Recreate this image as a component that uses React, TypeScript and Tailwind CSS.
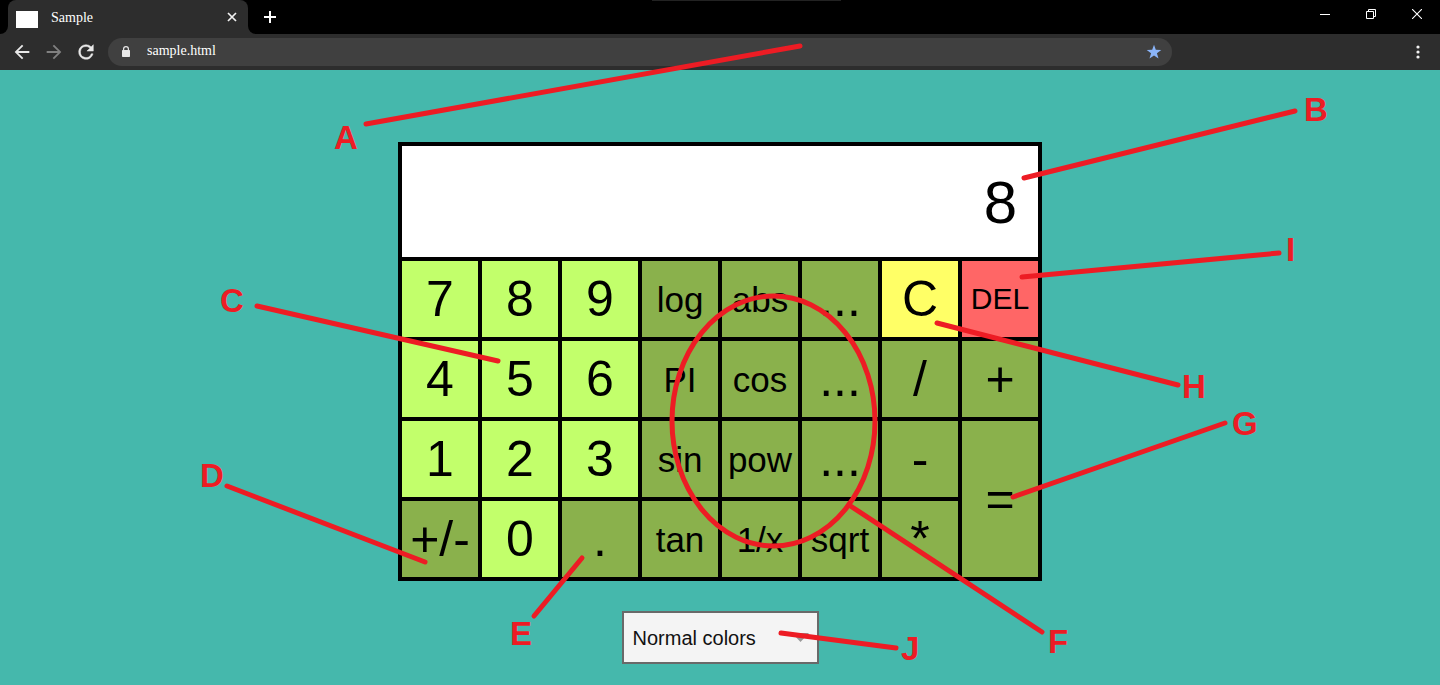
import React from "react";

type Tone = "digit" | "dark" | "clear" | "del";
type Key = { label: string; tone: Tone; size?: "md" | "sm"; tall?: boolean };

const tones: Record<Tone, string> = {
  digit: "bg-[#c2ff6b]",
  dark: "bg-[#8ab14c]",
  clear: "bg-[#ffff66]",
  del: "bg-[#ff6666]",
};

const d = (label: string): Key => ({ label, tone: "digit" });
const op = (label: string): Key => ({ label, tone: "dark" });
const fn = (label: string): Key => ({ label, tone: "dark", size: "md" });

const keys: Key[] = [
  d("7"), d("8"), d("9"), fn("log"), fn("abs"), op("..."),
  { label: "C", tone: "clear" },
  { label: "DEL", tone: "del", size: "sm" },
  d("4"), d("5"), d("6"), fn("PI"), fn("cos"), op("..."), op("/"), op("+"),
  d("1"), d("2"), d("3"), fn("sin"), fn("pow"), op("..."), op("-"),
  { label: "=", tone: "dark", tall: true },
  op("+/-"), d("0"), op("."), fn("tan"), fn("1/x"), fn("sqrt"), op("*"),
];

function CalcKey({ k }: { k: Key }) {
  const text =
    k.size === "md" ? "text-[35px]" : k.size === "sm" ? "text-[30px]" : "text-[50px]";
  return (
    <button
      type="button"
      className={`flex items-center justify-center leading-none text-black ${tones[k.tone]} ${text} ${k.tall ? "row-span-2" : ""}`}
    >
      {k.label}
    </button>
  );
}

function Browser() {
  return (
    <header className="font-['Liberation_Serif',serif] text-sm text-white">
      <div className="relative flex h-[34px] bg-black">
        <div className="absolute left-1/2 top-0 h-px w-[189px] -translate-x-[68px] bg-[#222222]" />
        <div className="flex w-2 items-end bg-[#2d2d2d]">
          <div className="h-full w-full rounded-br-lg bg-black" />
        </div>
        <div className="bg-black">
          <div className="flex h-[34px] w-60 items-center rounded-t-lg bg-[#2d2d2d] px-2">
            <span className="mt-1 h-[17px] w-[22px] bg-white" />
            <span className="ml-[13px] mt-0.5 flex-1">Sample</span>
            <button type="button" aria-label="Close tab" className="flex size-4 items-center justify-center">
              <svg width="10" height="10" viewBox="0 0 10 10" stroke="#f1f1f1" strokeWidth="1.7">
                <path d="M1 1l8 8M9 1l-8 8" />
              </svg>
            </button>
          </div>
        </div>
        <div className="w-2 bg-[#2d2d2d]">
          <div className="h-full w-full rounded-bl-lg bg-black" />
        </div>
        <button type="button" aria-label="New tab" className="flex w-7 items-center justify-center">
          <svg width="12" height="12" viewBox="0 0 12 12" stroke="white" strokeWidth="2">
            <path d="M6 0v12M0 6h12" />
          </svg>
        </button>
        <div className="ml-auto flex h-7">
          <button type="button" aria-label="Minimize" className="flex w-[46px] items-center justify-center">
            <svg width="10" height="10" viewBox="0 0 10 10" stroke="white">
              <path d="M0 5.5h10" />
            </svg>
          </button>
          <button type="button" aria-label="Restore" className="flex w-[46px] items-center justify-center">
            <svg width="10" height="10" viewBox="0 0 10 10" fill="none" stroke="white">
              <path d="M.5 2.5h7v7h-7zM2.5 2.5v-2h7v7h-2" />
            </svg>
          </button>
          <button type="button" aria-label="Close window" className="flex w-[46px] items-center justify-center">
            <svg width="10" height="10" viewBox="0 0 10 10" stroke="white" strokeWidth="1.1">
              <path d="M0 0l10 10M10 0l-10 10" />
            </svg>
          </button>
        </div>
      </div>
      <div className="flex h-9 items-center bg-[#2d2d2d] px-[11px]">
        <button type="button" aria-label="Back" className="text-[#e8e8e8]">
          <svg width="22" height="22" viewBox="0 0 24 24" fill="currentColor">
            <path d="M20 11H7.83l5.59-5.59L12 4l-8 8 8 8 1.41-1.41L7.83 13H20v-2z" />
          </svg>
        </button>
        <button type="button" aria-label="Forward" className="ml-2.5 text-[#808080]">
          <svg width="22" height="22" viewBox="0 0 24 24" fill="currentColor">
            <path d="M12 4l-1.41 1.41L16.17 11H4v2h12.17l-5.58 5.59L12 20l8-8z" />
          </svg>
        </button>
        <button type="button" aria-label="Reload" className="ml-2.5 text-[#e8e8e8]">
          <svg width="22" height="22" viewBox="0 0 24 24" fill="currentColor" stroke="currentColor" strokeWidth="0.5">
            <path d="M17.65 6.35A7.96 7.96 0 0 0 12 4a8 8 0 1 0 7.73 10h-2.08A6 6 0 1 1 12 6c1.66 0 3.14.69 4.22 1.78L13 11h7V4l-2.35 2.35z" />
          </svg>
        </button>
        <div className="ml-[11px] mr-[235px] flex h-7 flex-1 items-center rounded-full bg-[#404040] pl-3 pr-2.5">
          <svg width="12" height="14" viewBox="0 0 12 14" fill="#e8e8e8">
            <path d="M3 5V4a3 3 0 0 1 6 0v1h.3a.7.7 0 0 1 .7.7v5.6a.7.7 0 0 1-.7.7H2.7a.7.7 0 0 1-.7-.7V5.7a.7.7 0 0 1 .7-.7zM4.2 5h3.6V4a1.800 1.800 0 0 0-3.600 0z" />
          </svg>
          <input
            aria-label="Address"
            defaultValue="sample.html"
            className="ml-[15px] h-5 min-w-0 flex-1 bg-transparent pb-0.5 outline-none"
          />
          <button type="button" aria-label="Bookmark">
            <svg width="16" height="16" viewBox="0 0 16 16" fill="#8ab4f8">
              <path d="M8 .7l1.800 5.100 5.500.1-4.400 3.300 1.600 5.300L8 11.400l-4.500 3.100 1.600-5.300L.7 5.900l5.500-.1z" />
            </svg>
          </button>
        </div>
        <button type="button" aria-label="Menu" className="flex w-[22px] justify-center">
          <svg width="4" height="14" viewBox="0 0 4 14" fill="#f1f1f1">
            <circle cx="2" cy="2" r="1.6" />
            <circle cx="2" cy="7" r="1.6" />
            <circle cx="2" cy="12" r="1.6" />
          </svg>
        </button>
      </div>
    </header>
  );
}

const callouts: [string, number, number, string][] = [
  ["A", 334, 149, "M366 124L800 46"],
  ["B", 1304, 121, "M1024 178L1295 111"],
  ["C", 220, 312, "M257 306L498 361"],
  ["D", 200, 487, "M227 486L425 562"],
  ["E", 510, 645, "M534 616L582 558"],
  ["F", 1048, 653, "M849 505L1042 632"],
  ["G", 1232, 435, "M1013 497L1225 423"],
  ["H", 1182, 398, "M937 323L1178 385"],
  ["I", 1286, 261, "M1022 277L1279 253"],
  ["J", 901, 660, "M781 633L896 648"],
];

function Callouts() {
  return (
    <svg
      className="pointer-events-none absolute left-1/2 top-0 h-[685px] w-[1440px] max-w-none -translate-x-1/2"
      viewBox="0 0 1440 685"
      fill="none"
      stroke="#ed1c24"
      strokeWidth="5"
      strokeLinecap="round"
    >
      <ellipse cx="773.5" cy="421" rx="101.5" ry="125" />
      {callouts.map(([name, x, y, line]) => (
        <g key={name}>
          <path d={line} />
          <text x={x} y={y} fill="#ed1c24" stroke="none" className="text-[33px] font-bold">
            {name}
          </text>
        </g>
      ))}
    </svg>
  );
}

export default function App() {
  return (
    <div className="relative min-h-screen overflow-hidden bg-[#45b8ac] font-['Liberation_Sans',Arial,sans-serif]">
      <Browser />
      <main className="flex flex-col items-center px-4 pt-[72px]">
        <section aria-label="Calculator" className="w-full max-w-[644px] border-4 border-black bg-black">
          <output className="flex h-[111px] items-center justify-end bg-white pr-[21px] pt-0.5 text-[60px] leading-none text-black">
            8
          </output>
          <div className="mt-1 grid auto-rows-[76px] grid-cols-8 gap-1">
            {keys.map((k, i) => (
              <CalcKey key={i} k={k} />
            ))}
          </div>
        </section>
        <div className="relative mt-[30px]">
          <select
            aria-label="Color scheme"
            className="h-[53px] w-[197px] appearance-none border-2 border-[#696969] bg-[#f4f4f4] px-[9px] text-xl text-[#111111]"
          >
            <option>Normal colors</option>
          </select>
          <svg className="pointer-events-none absolute right-2.5 top-[22px]" width="17" height="9" viewBox="0 0 17 9">
            <path d="M0 0h17L8.5 9z" fill="#999999" />
          </svg>
        </div>
      </main>
      <Callouts />
    </div>
  );
}
